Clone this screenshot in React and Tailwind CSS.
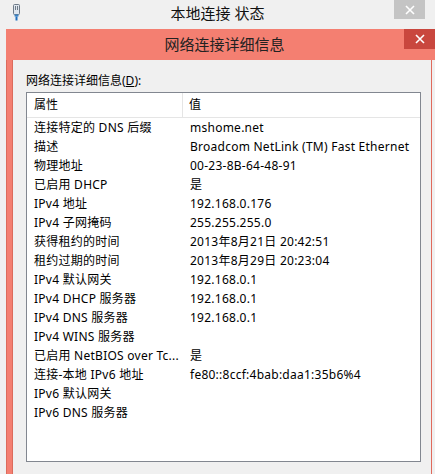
import { useState } from "react";

const rows = [
  ["连接特定的 DNS 后缀", "mshome.net"],
  ["描述", "Broadcom NetLink (TM) Fast Ethernet"],
  ["物理地址", "00-23-8B-64-48-91"],
  ["已启用 DHCP", "是"],
  ["IPv4 地址", "192.168.0.176"],
  ["IPv4 子网掩码", "255.255.255.0"],
  ["获得租约的时间", "2013年8月21日 20:42:51"],
  ["租约过期的时间", "2013年8月29日 20:23:04"],
  ["IPv4 默认网关", "192.168.0.1"],
  ["IPv4 DHCP 服务器", "192.168.0.1"],
  ["IPv4 DNS 服务器", "192.168.0.1"],
  ["IPv4 WINS 服务器", ""],
  ["已启用 NetBIOS over Tc...", "是"],
  ["连接-本地 IPv6 地址", "fe80::8ccf:4bab:daa1:35b6%4"],
  ["IPv6 默认网关", ""],
  ["IPv6 DNS 服务器", ""],
];

function CloseX({ size = 10 }) {
  return (
    <svg width={size} height={size} viewBox="0 0 10 10">
      <path d="M1 1 L9 9 M9 1 L1 9" stroke="#fff" strokeWidth="1.6" />
    </svg>
  );
}

function PlugIcon() {
  return (
    <svg width="9" height="17" viewBox="0 0 9 17">
      <rect x="1.5" y="0.5" width="6" height="10" rx="1" fill="#dfe6ee" stroke="#6f7b88" />
      <rect x="3" y="2" width="1" height="4" fill="#6f7b88" />
      <rect x="5" y="2" width="1" height="4" fill="#6f7b88" />
      <rect x="2.5" y="10.5" width="4" height="2" fill="#3b82c4" />
      <rect x="3.5" y="12.5" width="2" height="4" fill="#1e6fbf" />
    </svg>
  );
}

export default function App() {
  const [selected] = useState(-1);

  return (
    <div
      className="relative h-[474px] w-[435px] overflow-hidden bg-[#f0f0f0] text-black"
      style={{ fontFamily: '"Noto Sans", "Noto Sans CJK SC", sans-serif' }}
    >
      {/* outer window title */}
      <div className="relative flex h-[29px] items-start">
        <div className="ml-[12px] mt-[4px]">
          <PlugIcon />
        </div>
        <div className="absolute left-0 right-0 top-[3px] text-center text-[15px] leading-[20px] text-[#111]">
          本地连接 状态
        </div>
        <div className="absolute right-[10px] top-0 flex h-[19px] w-[31px] items-center justify-center bg-[#c4c4c4]">
          <CloseX />
        </div>
      </div>

      {/* details dialog */}
      <div className="ml-[6px] flex h-[445px] flex-col">
        <div className="relative flex h-[31px] items-center justify-center bg-[#f47f71] pl-[8px] text-[15px] text-[#222]">
          网络连接详细信息
          <div className="absolute right-0 top-0 flex h-[20px] w-[31px] items-center justify-center bg-[#c9473e]">
            <CloseX />
          </div>
        </div>

        <div className="flex flex-1">
          <div className="w-[7px] border-x border-[#dc6b5c] bg-[#f47f71]" />
          <div className="flex w-[418px] flex-col bg-[#f0f0f0] px-[13px] pt-[13px]">
            <div className="text-[12px] leading-[16px]">
              网络连接详细信息(<span className="underline">D</span>):
            </div>
            <div className="mt-[3px] h-[370px] w-[395px] border border-[#828790] bg-white">
              <div className="flex h-[25px] border-b border-[#e5e5e5] text-[12px]">
                <div className="flex w-[156px] items-center border-r border-[#e5e5e5] pl-[7px]">
                  属性
                </div>
                <div className="flex items-center pl-[6px]">值</div>
              </div>
              {rows.map(([k, v], i) => (
                <div
                  key={k}
                  className={
                    "flex h-[19px] items-center text-[12px] tracking-[0.25px] " +
                    (selected === i ? "bg-[#cce8ff]" : "")
                  }
                >
                  <div className="w-[156px] whitespace-nowrap pl-[7px]">{k}</div>
                  <div className="whitespace-nowrap pl-[7px]">{v}</div>
                </div>
              ))}
            </div>
          </div>
          <div className="w-px bg-[#e06a5c]" />
        </div>
      </div>
    </div>
  );
}
